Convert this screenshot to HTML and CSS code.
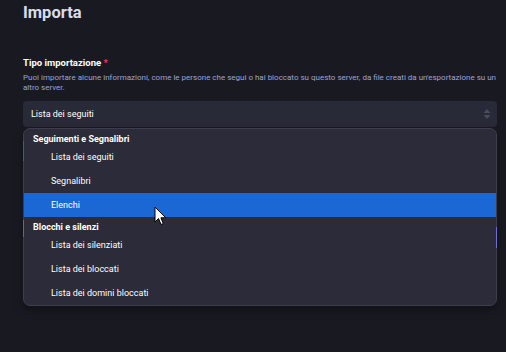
FILE: index.html
```html
<!DOCTYPE html>
<html lang="it">
<head>
<meta charset="UTF-8">
<meta name="viewport" content="width=device-width, initial-scale=1.0">
<title>Importa</title>
<link rel="stylesheet" href="styles.css">
</head>
<body>

<div class="page">
  <h1 class="title">Importa</h1>

  <div class="field">
    <label class="field-label">Tipo importazione <span class="req">*</span></label>
    <p class="hint">Puoi importare alcune informazioni, come le persone che segui o hai bloccato su questo server, da file creati da un'esportazione su un altro server.</p>

    <div class="select-wrap">
      <div class="select">
        <span>Lista dei seguiti</span>
        <svg class="arrows" width="8" height="10" viewBox="0 0 8 10">
          <path d="M4 0 L7.5 4 H0.5 Z" fill="#4a4b5e"/>
          <path d="M4 10 L7.5 6 H0.5 Z" fill="#4a4b5e"/>
        </svg>
      </div>

      <ul class="dropdown">
        <li class="group">Seguimenti e Segnalibri</li>
        <li class="option">Lista dei seguiti</li>
        <li class="option">Segnalibri</li>
        <li class="option active">Elenchi</li>
        <li class="group">Blocchi e silenzi</li>
        <li class="option">Lista dei silenziati</li>
        <li class="option">Lista dei bloccati</li>
        <li class="option">Lista dei domini bloccati</li>
      </ul>

      <!-- edges of the form showing through the list border -->
      <div class="peek peek-left1"></div>
      <div class="peek peek-left2"></div>
      <div class="peek peek-right"></div>
    </div>
  </div>
</div>

<!-- mouse pointer -->
<svg class="cursor" width="13" height="20" viewBox="0 0 13 20">
  <path d="M1 1 V16 L4.5 12.5 L7 18.5 L9.3 17.5 L6.9 11.8 L11.8 11.8 Z" fill="#fff" stroke="#000" stroke-width="1"/>
</svg>

</body>
</html>
```

FILE: styles.css
```css
body {
  margin: 0;
  padding: 0;
  background-color: #191a21;
  font-family: Roboto, "Liberation Sans", sans-serif;
  color: #fff;
  width: 506px;
  height: 352px;
  overflow: hidden;
  position: relative;
}

.page {
  padding: 0 9px 0 23px;
}

/* Heading */
.title {
  margin: 3px 0 0;
  font-size: 16.5px;
  font-weight: 700;
  line-height: 20px;
  color: #d9dcee;
}

/* Field */
.field {
  margin-top: 34px;
}

.field-label {
  display: block;
  font-size: 9.5px;
  font-weight: 700;
  line-height: 12px;
  color: #fff;
}

.req {
  color: #df405a;
}

.hint {
  margin: 4px 0 0;
  font-size: 8px;
  line-height: 10px;
  color: #9ba3d8;
}

/* Select */
.select-wrap {
  position: relative;
  margin-top: 7.5px;
}

.select {
  display: flex;
  align-items: center;
  justify-content: space-between;
  height: 26px;
  padding: 0 6px 0 8px;
  background-color: #292a37;
  border-radius: 4px;
  font-size: 9px;
  color: #fff;
}

/* Dropdown list */
.dropdown {
  position: absolute;
  left: 0;
  right: 0;
  top: 27px;
  margin: 0;
  padding: 0;
  list-style: none;
  background-color: #2c2b3a;
  border: 1px solid #3d3d4b;
  border-radius: 7px;
  box-shadow: 0 4px 10px rgba(0, 0, 0, 0.35);
  font-size: 9px;
  overflow: hidden;
}

.dropdown li {
  white-space: nowrap;
}

.group {
  height: 16px;
  line-height: 20px;
  padding-left: 9px;
  font-weight: 700;
}

.option {
  height: 24px;
  line-height: 24px;
  padding-left: 27px;
}

.option.active {
  background-color: #1b68d4;
}

.peek {
  position: absolute;
  width: 1px;
}

.peek-left1 {
  left: 0;
  top: 40px;
  height: 20px;
  background-color: rgba(90, 110, 170, 0.55);
}

.peek-left2 {
  left: 0;
  top: 119px;
  height: 17px;
  background-color: rgba(110, 112, 220, 0.7);
}

.peek-right {
  right: 0;
  top: 126px;
  height: 21px;
  background-color: #6a6fd8;
}

.cursor {
  position: absolute;
  left: 154px;
  top: 206px;
}
```
